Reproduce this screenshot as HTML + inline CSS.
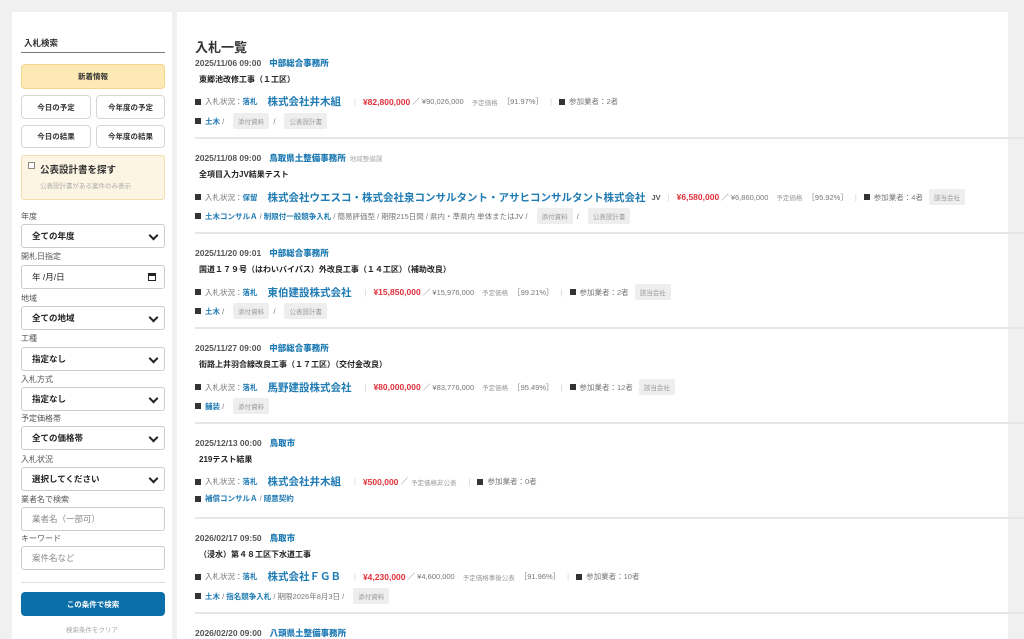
<!DOCTYPE html>
<html><head><meta charset="utf-8">
<style>
*{box-sizing:border-box;margin:0;padding:0}
html,body{width:1024px;height:639px;overflow:hidden}
body{background:#f0f0f0;font-family:"Liberation Sans","Noto Sans CJK JP",sans-serif;color:#333;position:relative}
.side{position:absolute;left:12px;top:12px;width:160px;height:640px;background:#fff}
.main{position:absolute;left:177px;top:12px;width:831px;height:640px;background:#fff}
.a{position:absolute;white-space:nowrap}
.btn{position:absolute;border:1px solid #d6d6d6;border-radius:4px;background:#fff;font-size:7.5px;font-weight:bold;display:flex;align-items:center;justify-content:center;color:#333}
.lbl{position:absolute;left:9px;font-size:8px;color:#555}
.sel{position:absolute;left:9px;width:144px;height:24px;border:1px solid #ccc;border-radius:3px;font-size:8.5px;padding-left:10px;display:flex;align-items:center;color:#222;font-weight:bold}
.sel:after{content:"";position:absolute;right:7px;top:7px;width:5px;height:5px;border-right:2px solid #222;border-bottom:2px solid #222;transform:rotate(45deg)}
.inp{position:absolute;left:9px;width:144px;height:24px;border:1px solid #ccc;border-radius:3px;font-size:8.5px;padding-left:10px;display:flex;align-items:center;color:#888}
.item{position:absolute;left:18px;width:840px;height:95px}
.d{position:absolute;top:-6px;font-size:8.5px;font-weight:bold;color:#555;white-space:nowrap}
.d b{color:#1f7bb3;margin-left:8px}
.d i{font-style:normal;font-weight:normal;color:#aaa;font-size:6.5px;margin-left:4px}
.t{position:absolute;left:4px;top:11px;font-size:8px;font-weight:bold;color:#222;white-space:nowrap}
.s{position:absolute;top:31px;font-size:7.5px;color:#777;white-space:nowrap;display:flex;align-items:center}
.g{position:absolute;top:50px;font-size:7.5px;color:#777;white-space:nowrap;display:flex;align-items:center}
.sq{display:inline-block;width:6px;height:6px;background:#333;margin-right:4px}
.bl{color:#1f7bb3;font-weight:bold}
.co{color:#1f7bb3;font-weight:bold;font-size:10.5px;margin:0 6px 0 10px}
.red{color:#e0303a;font-weight:bold;font-size:8.5px}
.sep{color:#ccc;margin:0 7px}
.sm{font-size:6.5px;color:#999;margin:0 5px 0 8px}
.tag{background:#eee;color:#999;font-size:6.5px;padding:3px 5px;border-radius:2px;margin-left:9px}
.hr{position:absolute;left:195px;width:829px;height:2px;background:#e6e6e6}
</style></head><body>
<div class="side">
 <div class="a" style="left:12px;top:25px;font-size:8.5px;color:#333;font-weight:bold">入札検索</div>
 <div class="a" style="left:9px;top:40px;width:144px;height:1px;background:#777"></div>
 <div class="btn" style="left:9px;top:52px;width:144px;height:25px;background:#fde9b3;border-color:#f4d68a">新着情報</div>
 <div class="btn" style="left:9px;top:83px;width:70px;height:24px">今日の予定</div>
 <div class="btn" style="left:84px;top:83px;width:69px;height:24px">今年度の予定</div>
 <div class="btn" style="left:9px;top:113px;width:70px;height:23px">今日の結果</div>
 <div class="btn" style="left:84px;top:113px;width:69px;height:23px">今年度の結果</div>
 <div class="a" style="left:9px;top:143px;width:144px;height:45px;background:#fdf5e4;border:1px solid #f3dfae;border-radius:3px">
  <div class="a" style="left:6px;top:6px;width:7px;height:7px;border:1px solid #888;background:#fff"></div>
  <div class="a" style="left:18px;top:6px;font-size:9.5px;color:#333;font-weight:bold">公表設計書を探す</div>
  <div class="a" style="left:18px;top:24px;font-size:6.5px;color:#aaa">公表設計書がある案件のみ表示</div>
 </div>
 <div class="lbl" style="top:199px">年度</div><div class="sel" style="top:212px">全ての年度</div>
 <div class="lbl" style="top:239px">開札日指定</div><div class="inp" style="top:253px;color:#222">年 /月/日<span style="position:absolute;right:8px;top:7px;width:8px;height:8px;border:1.5px solid #222;border-top-width:3px"></span></div>
 <div class="lbl" style="top:281px">地域</div><div class="sel" style="top:294px">全ての地域</div>
 <div class="lbl" style="top:321px">工種</div><div class="sel" style="top:335px">指定なし</div>
 <div class="lbl" style="top:362px">入札方式</div><div class="sel" style="top:375px">指定なし</div>
 <div class="lbl" style="top:401px">予定価格帯</div><div class="sel" style="top:414px">全ての価格帯</div>
 <div class="lbl" style="top:442px">入札状況</div><div class="sel" style="top:455px">選択してください</div>
 <div class="lbl" style="top:482px">業者名で検索</div><div class="inp" style="top:495px">業者名（一部可）</div>
 <div class="lbl" style="top:521px">キーワード</div><div class="inp" style="top:534px">案件名など</div>
 <div class="a" style="left:9px;top:570px;width:144px;height:1px;background:#ddd"></div>
 <div class="btn" style="left:9px;top:580px;width:144px;height:24px;background:#0a6fa8;border-color:#0a6fa8;color:#fff">この条件で検索</div>
 <div class="a" style="left:0;width:160px;text-align:center;top:612px;font-size:6.5px;color:#aaa">検索条件をクリア</div>
</div>
<div class="main"></div>
<div class="a" style="left:195px;top:37px;font-size:13px;font-weight:bold;color:#333">入札一覧</div>

<div class="item" style="left:195px;top:63px">
 <div class="d">2025/11/06 09:00<b>中部総合事務所</b></div>
 <div class="t">東郷池改修工事（１工区）</div>
 <div class="s"><span class="sq"></span>入札状況：<span class="bl">落札</span><span class="co">株式会社井木組</span><span class="sep">|</span><span class="red">¥82,800,000</span>&nbsp;／ ¥90,026,000<span class="sm">予定価格</span>［91.97%］<span class="sep">|</span><span class="sq"></span>参加業者：2者</div>
 <div class="g"><span class="sq"></span><span class="bl">土木</span>&nbsp;/<span class="tag">添付資料</span>&nbsp;&nbsp;/<span class="tag">公表設計書</span></div>
</div>
<div class="hr" style="top:137px"></div>

<div class="item" style="left:195px;top:158px">
 <div class="d">2025/11/08 09:00<b>鳥取県土整備事務所</b><i>地域整備課</i></div>
 <div class="t">全項目入力JV結果テスト</div>
 <div class="s"><span class="sq"></span>入札状況：<span class="bl">保留</span><span class="co">株式会社ウエスコ・株式会社泉コンサルタント・アサヒコンサルタント株式会社</span><b style="color:#555">JV</b><span class="sep">|</span><span class="red">¥6,580,000</span>&nbsp;／ ¥6,860,000<span class="sm">予定価格</span>［95.92%］<span class="sep">|</span><span class="sq"></span>参加業者：4者<span class="tag" style="margin-left:6px">該当会社</span></div>
 <div class="g"><span class="sq"></span><span class="bl">土木コンサルＡ</span>&nbsp;/&nbsp;<span class="bl">制限付一般競争入札</span>&nbsp;/ 簡易評価型 / 期限215日間 / 県内・準県内 単体またはJV /<span class="tag">添付資料</span>&nbsp;&nbsp;/<span class="tag">公表設計書</span></div>
</div>
<div class="hr" style="top:232px"></div>

<div class="item" style="left:195px;top:253px">
 <div class="d">2025/11/20 09:01<b>中部総合事務所</b></div>
 <div class="t">国道１７９号（はわいバイパス）外改良工事（１４工区）（補助改良）</div>
 <div class="s"><span class="sq"></span>入札状況：<span class="bl">落札</span><span class="co">東伯建設株式会社</span><span class="sep">|</span><span class="red">¥15,850,000</span>&nbsp;／ ¥15,976,000<span class="sm">予定価格</span>［99.21%］<span class="sep">|</span><span class="sq"></span>参加業者：2者<span class="tag" style="margin-left:6px">該当会社</span></div>
 <div class="g"><span class="sq"></span><span class="bl">土木</span>&nbsp;/<span class="tag">添付資料</span>&nbsp;&nbsp;/<span class="tag">公表設計書</span></div>
</div>
<div class="hr" style="top:327px"></div>

<div class="item" style="left:195px;top:348px">
 <div class="d">2025/11/27 09:00<b>中部総合事務所</b></div>
 <div class="t">街路上井羽合線改良工事（１７工区）（交付金改良）</div>
 <div class="s"><span class="sq"></span>入札状況：<span class="bl">落札</span><span class="co">馬野建設株式会社</span><span class="sep">|</span><span class="red">¥80,000,000</span>&nbsp;／ ¥83,776,000<span class="sm">予定価格</span>［95.49%］<span class="sep">|</span><span class="sq"></span>参加業者：12者<span class="tag" style="margin-left:6px">該当会社</span></div>
 <div class="g"><span class="sq"></span><span class="bl">舗装</span>&nbsp;/<span class="tag">添付資料</span></div>
</div>
<div class="hr" style="top:422px"></div>

<div class="item" style="left:195px;top:443px">
 <div class="d">2025/12/13 00:00<b>鳥取市</b></div>
 <div class="t">219テスト結果</div>
 <div class="s"><span class="sq"></span>入札状況：<span class="bl">落札</span><span class="co">株式会社井木組</span><span class="sep">|</span><span class="red">¥500,000</span>&nbsp;／<span class="sm" style="margin-left:3px">予定価格非公表</span><span class="sep">|</span><span class="sq"></span>参加業者：0者</div>
 <div class="g"><span class="sq"></span><span class="bl">補償コンサルＡ</span>&nbsp;/&nbsp;<span class="bl">随意契約</span></div>
</div>
<div class="hr" style="top:517px"></div>

<div class="item" style="left:195px;top:538px">
 <div class="d">2026/02/17 09:50<b>鳥取市</b></div>
 <div class="t">（浸水）第４８工区下水道工事</div>
 <div class="s"><span class="sq"></span>入札状況：<span class="bl">落札</span><span class="co">株式会社ＦＧＢ</span><span class="sep">|</span><span class="red">¥4,230,000</span>&nbsp;／ ¥4,600,000<span class="sm">予定価格事後公表</span>［91.96%］<span class="sep">|</span><span class="sq"></span>参加業者：10者</div>
 <div class="g"><span class="sq"></span><span class="bl">土木</span>&nbsp;/&nbsp;<span class="bl">指名競争入札</span>&nbsp;/ 期限2026年8月3日 /<span class="tag">添付資料</span></div>
</div>
<div class="hr" style="top:612px"></div>

<div class="item" style="left:195px;top:633px">
 <div class="d">2026/02/20 09:00<b>八頭県土整備事務所</b></div>
</div>
</body></html>
